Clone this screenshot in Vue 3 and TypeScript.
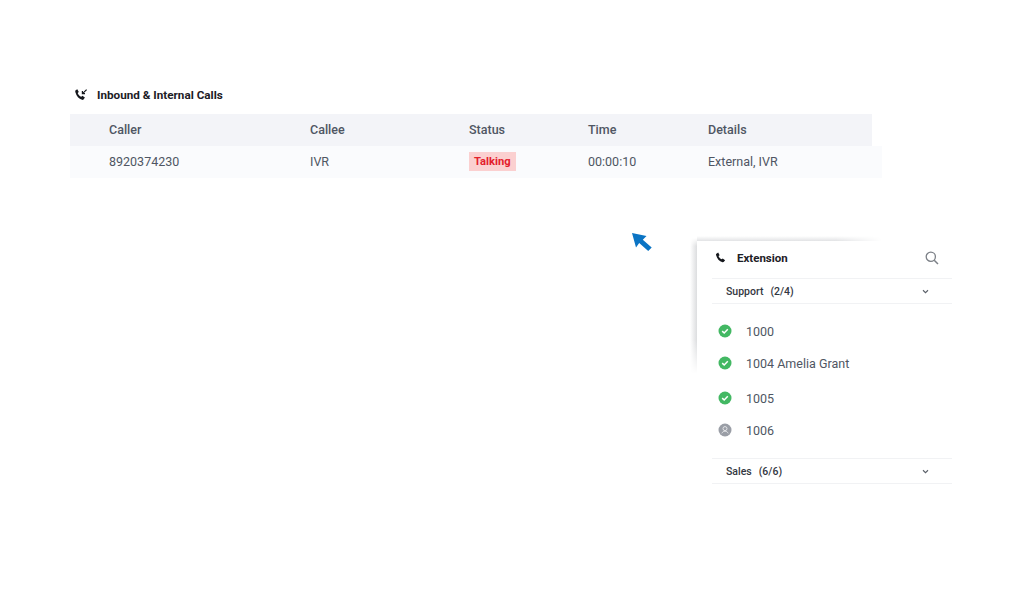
<template>
  <div class="page">
    <section class="calls">
      <h2 class="calls-title">
        <svg class="phone" viewBox="0 0 14 14" width="14" height="14">
          <path d="M1.600 2.200 3.300 1.200l1.500 2.700-1.100 1c.6 1.700 1.800 3 3.600 3.900l1.100-1 2.500 1.800-1.200 1.700c-.4.500-1 .7-1.600.5C4.800 10.700 2.600 8.200 1.300 3.900c-.2-.6 0-1.300.3-1.700Z" fill="#16181d" />
          <path d="M12.600 1.600 8.800 5.400M8.400 3.100v2.600h2.600" fill="none" stroke="#16181d" stroke-width="1.200" />
        </svg>
        Inbound &amp; Internal Calls
      </h2>
      <div class="row head">
        <span v-for="c in columns" :key="c">{{ c }}</span>
      </div>
      <div class="row body">
        <span>8920374230</span>
        <span>IVR</span>
        <span><b class="badge">Talking</b></span>
        <span>00:00:10</span>
        <span>External, IVR</span>
      </div>
    </section>

    <svg class="cursor" viewBox="0 0 20 18" width="20" height="18">
      <path d="M0 0 14.500 3 10.800 6.700 19.700 14.600 16.200 18 7.200 10 4 14.500Z" fill="#0b74c4" />
    </svg>

    <aside class="ext">
      <header class="ext-head">
        <svg class="phone" viewBox="0 0 14 14" width="12" height="12">
          <path d="M1.600 1.900 3.700.7l1.700 3-1.300 1c.6 1.700 1.900 3.100 3.700 3.900l1.200-1.100 2.800 2-1.400 2c-.4.500-1 .7-1.600.5C4.800 10.700 2.400 8 1.200 3.500c-.2-.6 0-1.200.4-1.600Z" fill="#16181d" />
        </svg>
        <span class="ext-title">Extension</span>
        <svg class="search" viewBox="0 0 14 14" width="14" height="14">
          <circle cx="5.800" cy="5.800" r="4.600" fill="none" stroke="#7c8087" stroke-width="1.300" />
          <path d="M9.200 9.200 13 13" fill="none" stroke="#7c8087" stroke-width="1.500" />
        </svg>
      </header>

      <template v-for="g in groups" :key="g.name">
        <div class="group">
          <span>{{ g.name }}<i class="count">({{ g.count }})</i></span>
          <svg viewBox="0 0 8 6" width="7" height="5">
            <path d="M1 1.500 4 4.500 7 1.500" fill="none" stroke="#5b6069" stroke-width="1.300" />
          </svg>
        </div>
        <ul v-if="g.members.length" class="members">
          <li v-for="m in g.members" :key="m.label" :class="{ spaced: m.label === '1005' }">
            <svg v-if="m.online" viewBox="0 0 14 14" width="14" height="14">
              <circle cx="7" cy="7" r="6.500" fill="#43b863" />
              <path d="M4.200 7.100 6.200 9 9.800 5.300" fill="none" stroke="#fff" stroke-width="1.500" />
            </svg>
            <svg v-else viewBox="0 0 14 14" width="14" height="14">
              <circle cx="7" cy="7" r="6.500" fill="#9a9ea6" />
              <circle cx="7" cy="5.600" r="2" fill="none" stroke="#e4e5e8" stroke-width="1" />
              <path d="M3.800 10.300c.8-1.500 1.900-2.100 3.200-2.100s2.400.6 3.200 2.100" fill="none" stroke="#e4e5e8" stroke-width="1" />
            </svg>
            <span>{{ m.label }}</span>
          </li>
        </ul>
      </template>
    </aside>
  </div>
</template>

<script setup lang="ts">
interface Member {
  label: string
  online: boolean
}

interface Group {
  name: string
  count: string
  members: Member[]
}

const columns: string[] = ['Caller', 'Callee', 'Status', 'Time', 'Details']

const groups: Group[] = [
  {
    name: 'Support',
    count: '2/4',
    members: [
      { label: '1000', online: true },
      { label: '1004 Amelia Grant', online: true },
      { label: '1005', online: true },
      { label: '1006', online: false },
    ],
  },
  { name: 'Sales', count: '6/6', members: [] },
]
</script>

<style scoped>
.page {
  position: relative;
  width: 1024px;
  height: 589px;
  overflow: hidden;
  background: #fff;
  font-family: Roboto, "Liberation Sans", sans-serif;
  color: #4f5663;
  padding-top: 86px;
  box-sizing: border-box;
}
.calls {
  width: 812px;
  margin-left: 70px;
}
.calls-title {
  display: flex;
  align-items: center;
  gap: 9px;
  height: 19px;
  box-sizing: border-box;
  padding-bottom: 2px;
  margin: 0 0 9px 4px;
  font-size: 11.700px;
  font-weight: 700;
  color: #1d2026;
}
.row {
  display: grid;
  grid-template-columns: 201px 159px 119px 120px 1fr;
  align-items: center;
  height: 32px;
  box-sizing: border-box;
  padding: 0 0 2px 39px;
  font-size: 12.500px;
}
.head {
  width: 802px;
  background: #f3f4f8;
  font-weight: 500;
}
.body {
  background: #fafbfd;
}
.badge {
  display: inline-block;
  padding: 0 5px;
  height: 19px;
  line-height: 19px;
  background: #fbd0d0;
  color: #e3202c;
  font-size: 11.200px;
  font-weight: 700;
}
.cursor {
  position: absolute;
  left: 632px;
  top: 233px;
}
.ext {
  position: relative;
  width: 255px;
  margin: 63px 0 0 697px;
  padding: 0 0 0 15px;
  box-sizing: border-box;
  background: #fff;
}
/* soft shadow: it only shows along the top and the upper left of the panel */
.ext::before {
  content: "";
  position: absolute;
  left: 0;
  top: -5px;
  width: 185px;
  height: 5px;
  background: linear-gradient(to top, #e2e3e5, #fff);
  -webkit-mask-image: linear-gradient(to right, #000 75%, transparent);
  mask-image: linear-gradient(to right, #000 75%, transparent);
}
.ext::after {
  content: "";
  position: absolute;
  left: -7px;
  top: -3px;
  width: 7px;
  height: 136px;
  background: linear-gradient(to left, #dcdddf, #fff);
  -webkit-mask-image: linear-gradient(to bottom, transparent, #000 6%, #000 75%, transparent);
  mask-image: linear-gradient(to bottom, transparent, #000 6%, #000 75%, transparent);
}
.ext-head {
  display: flex;
  align-items: center;
  height: 37px;
  box-sizing: border-box;
  padding: 0 13px 3px 3px;
}
.ext-title {
  margin-left: 10px;
  font-size: 11.500px;
  font-weight: 700;
  color: #1d2026;
}
.search {
  margin-left: auto;
}
.group {
  display: flex;
  align-items: center;
  justify-content: space-between;
  height: 26px;
  box-sizing: border-box;
  padding: 0 23px 0 14px;
  border-top: 1px solid #f1f2f4;
  border-bottom: 1px solid #f1f2f4;
  font-size: 10.500px;
  font-weight: 500;
  color: #33373f;
}
.count {
  margin-left: 7px;
  font-style: normal;
}
.members {
  list-style: none;
  margin: 0;
  padding: 11px 0 12px 6px;
}
.members li {
  display: flex;
  align-items: center;
  gap: 14px;
  height: 32px;
  font-size: 12.500px;
  color: #4f5663;
}
.members li.spaced {
  margin-top: 3px;
}
</style>

<style>
html,
body {
  background: #fff;
}
</style>
